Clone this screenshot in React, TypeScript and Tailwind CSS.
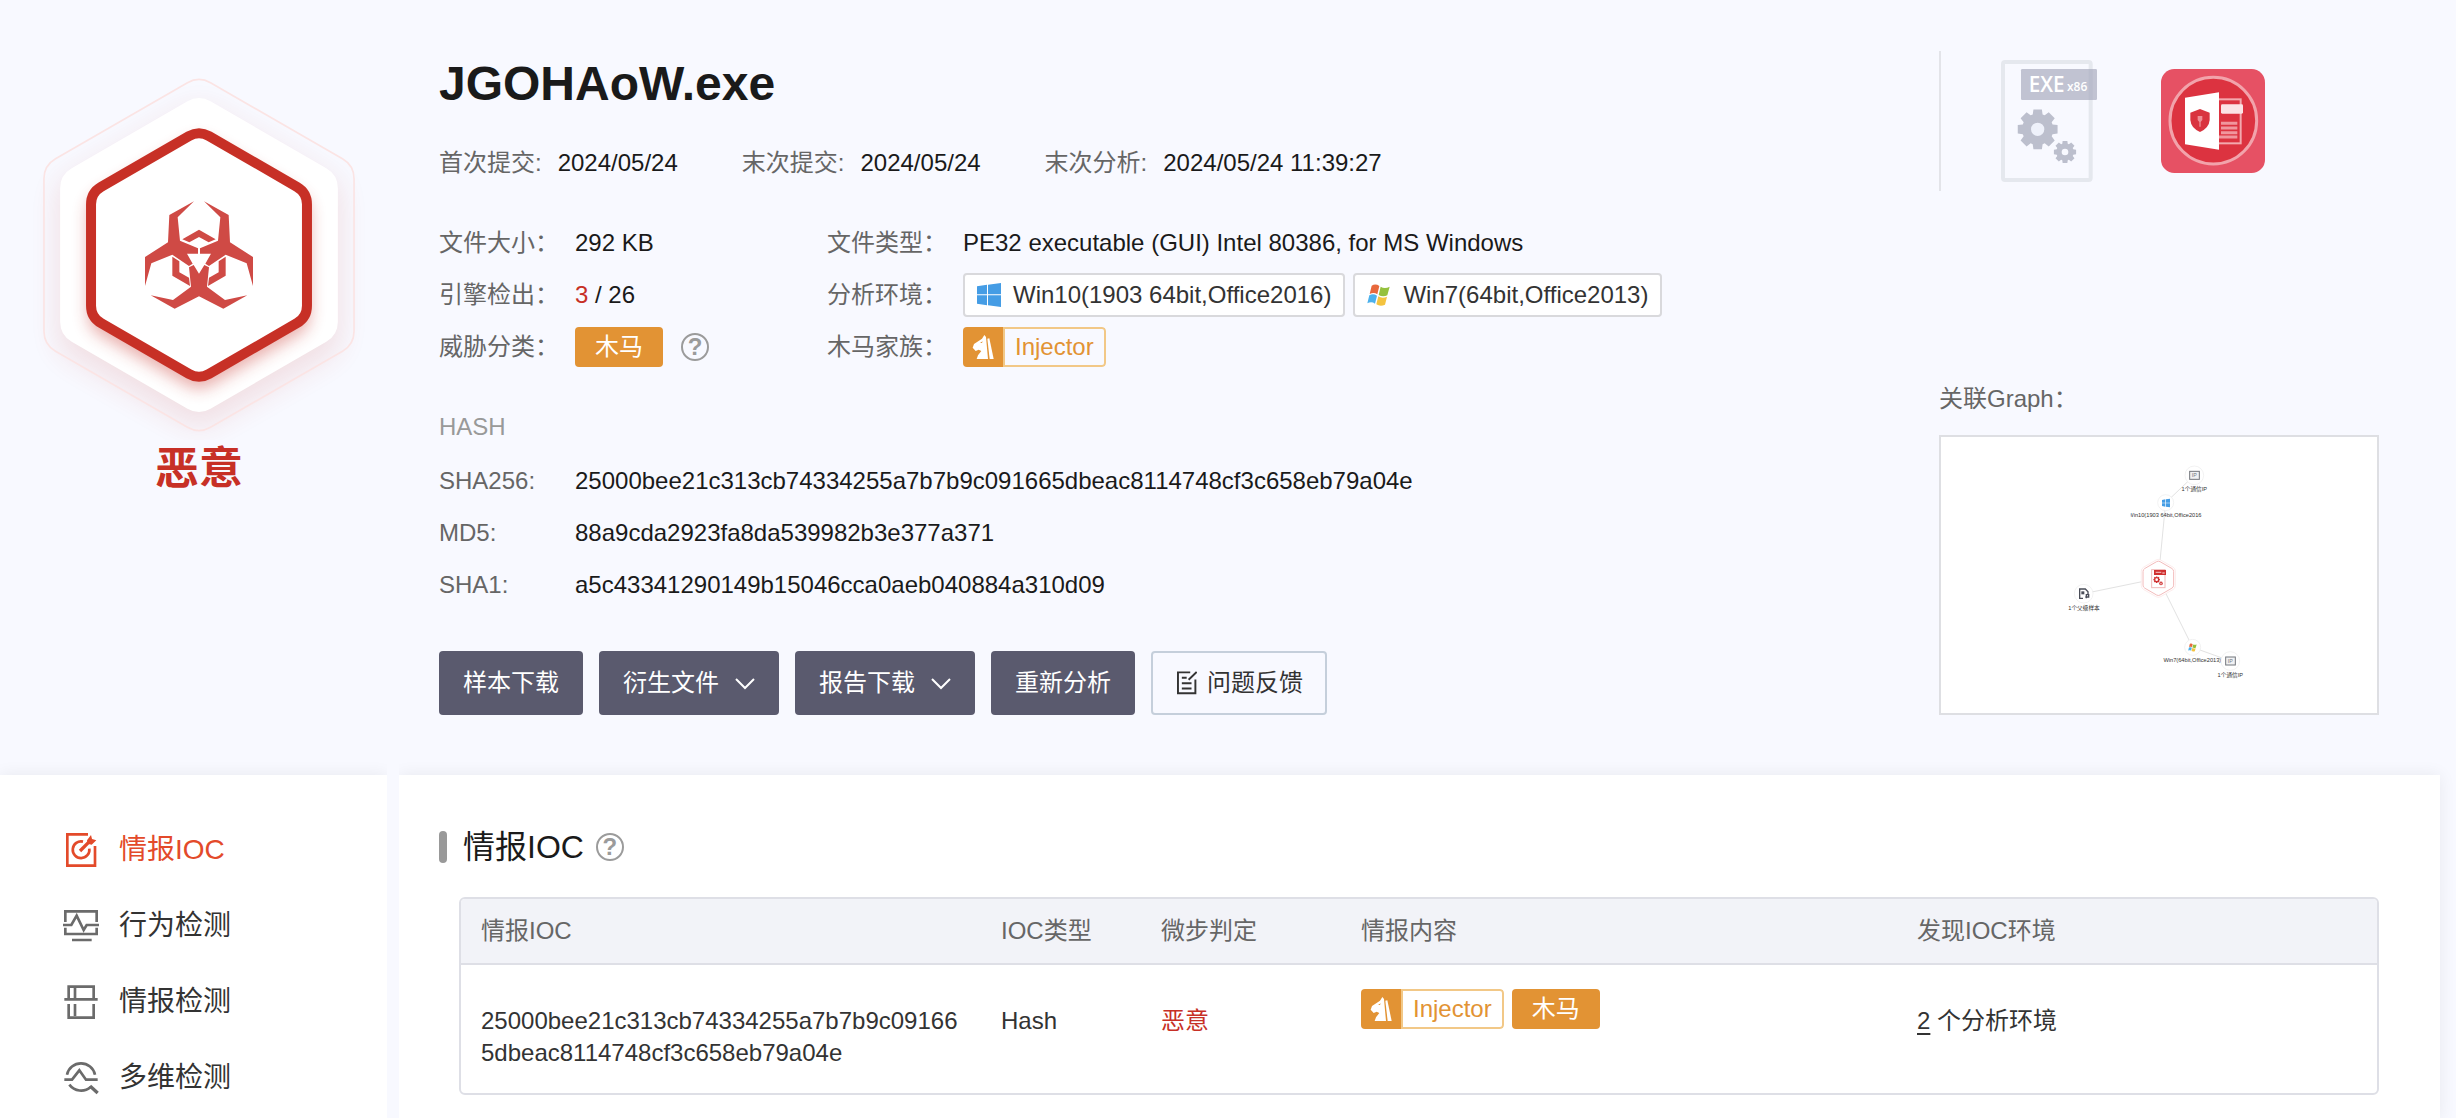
import React from "react";

const sans = "font-['Liberation_Sans','Noto_Sans_CJK_SC',sans-serif]";

function hexPath(cx: number, cy: number, radius: number, corner: number) {
  const pts = Array.from({ length: 6 }, (_, i) => {
    const a = (Math.PI / 3) * i - Math.PI / 2;
    return [cx + radius * Math.cos(a), cy + radius * Math.sin(a)];
  });
  const toward = (a: number[], b: number[]) => {
    const t = corner / radius;
    return `${(a[0] + (b[0] - a[0]) * t).toFixed(1)},${(a[1] + (b[1] - a[1]) * t).toFixed(1)}`;
  };
  return (
    pts
      .map((p, i) => {
        const prev = pts[(i + 5) % 6];
        const next = pts[(i + 1) % 6];
        return `${i === 0 ? "M" : "L"}${toward(p, prev)} Q${p[0].toFixed(1)},${p[1].toFixed(1)} ${toward(p, next)}`;
      })
      .join(" ") + " Z"
  );
}

function gearPath(cx: number, cy: number, outer: number, root: number, hole: number) {
  const pts: string[] = [];
  for (let i = 0; i < 8; i++) {
    const base = (Math.PI / 4) * i - Math.PI / 2;
    const steps: [number, number][] = [
      [-0.32, root],
      [-0.21, outer],
      [0.21, outer],
      [0.32, root],
    ];
    for (const [d, r] of steps) {
      pts.push(`${(cx + r * Math.cos(base + d)).toFixed(1)},${(cy + r * Math.sin(base + d)).toFixed(1)}`);
    }
  }
  return `M${pts.join("L")}Z M${cx - hole},${cy}a${hole},${hole} 0 1 0 ${hole * 2},0a${hole},${hole} 0 1 0 ${-hole * 2},0Z`;
}

function ThreatBadge() {
  const arm =
    "M612,484L686,525L690,607L759,651L759,738L740,670L677,644L627,678L616,671L633,641L600,641L600,625L654,602L661,532Z";
  const hook = "M677,650V707L624,738L627,713L656,697V664Z";
  return (
    <svg viewBox="0 0 1194 1200" className="h-[400px] w-full" role="img" aria-label="恶意">
      <defs>
        <filter id="soft" x="-30%" y="-30%" width="160%" height="160%">
          <feGaussianBlur stdDeviation="42" />
        </filter>
        <filter id="glow" x="-30%" y="-30%" width="160%" height="160%">
          <feGaussianBlur stdDeviation="24" />
        </filter>
        <clipPath id="plate">
          <path d={hexPath(597, 645, 481, 40)} />
        </clipPath>
      </defs>
      <path d={hexPath(597, 682, 490, 40)} fill="#c52d26" opacity="0.12" filter="url(#soft)" />
      <path d={hexPath(597, 645, 537, 40)} fill="none" stroke="#fbe4e4" strokeWidth="5" />
      <path d={hexPath(597, 645, 481, 40)} fill="#fff" />
      <g clipPath="url(#plate)">
        <path d={hexPath(597, 672, 385, 40)} fill="#c52d26" opacity="0.38" filter="url(#glow)" />
      </g>
      <path d={hexPath(597, 645, 374, 35)} fill="#fff" stroke="#c73026" strokeWidth="30" />
      <g fill="#cf4a45">
        <path d={arm} />
        <path d={arm} transform="matrix(-1 0 0 1 1194 0)" />
        <path d="M597,701L613,675L627,682L621,740L675,780L742,766L670,806L597,769L524,806L452,766L519,780L573,740L567,682L581,675Z" />
        <path d="M597,569L647,598L626,607L597,591L568,607L547,598Z" />
        <path d={hook} />
        <path d={hook} transform="matrix(-1 0 0 1 1194 0)" />
      </g>
    </svg>
  );
}

function Win10Logo() {
  return (
    <svg viewBox="0 0 72 72" className="size-6" fill="#459de5" aria-hidden="true">
      <path d="M0,10L30,5V34H0Z M33,5L72,0V34H33Z M0,37H30V67L0,62Z M33,37H72V72L33,67Z" />
    </svg>
  );
}

function Win7Shapes() {
  return (
    <>
      <path fill="#e8683c" d="M14,8C22,3 30,4 37,9L31,34C24,29 16,29 8,33Z" />
      <path fill="#95c13d" d="M41,11C49,16 58,16 68,11L61,37C53,41 43,41 35,36Z" />
      <path fill="#4cb1ec" d="M7,37C15,32 23,33 30,38L24,62C17,57 9,57 1,61Z" />
      <path fill="#f4c33f" d="M34,40C42,45 51,45 60,41L54,65C45,69 36,69 28,64Z" />
    </>
  );
}

function Win7Logo() {
  return (
    <svg viewBox="0 0 72 72" className="size-6" aria-hidden="true">
      <Win7Shapes />
    </svg>
  );
}

function FamilyTag() {
  return (
    <a href="#injector" className="flex h-10 items-stretch overflow-hidden rounded text-2xl leading-9 text-[#e29334]">
      <span className="flex w-10 items-center justify-center bg-[#e29334]">
        <svg viewBox="52 222 66 78" className="h-[26px] w-[22px]" fill="#fff" aria-hidden="true">
          <path d="M89,225L94,231L100,297H66L70,286L80,273L72,269L63,273L54,263L58,252L82,236Z" />
          <path d="M98,236L104,235L117,297H105Z" />
          <path d="M76,249L84,244L82,249Z" fill="#e29334" />
        </svg>
      </span>
      <span className="rounded-r border-2 border-[#f2c887] px-[10px]">Injector</span>
    </a>
  );
}

function ClassTag() {
  return <span className="flex h-10 w-[88px] items-center justify-center rounded bg-[#e29334] text-2xl leading-9 text-white">木马</span>;
}

function Help({ label }: { label: string }) {
  return (
    <button
      type="button"
      aria-label={label}
      className="flex size-7 items-center justify-center rounded-full border-2 border-[#9b9b9b] text-2xl leading-6 font-bold text-[#9b9b9b]"
    >
      ?
    </button>
  );
}

function Row({ label, children }: { label: string; children: React.ReactNode }) {
  return (
    <div className="flex h-[52px] items-center">
      <dt className="w-[136px] shrink-0 text-[#666]">{label}</dt>
      <dd className="flex items-center whitespace-nowrap">{children}</dd>
    </div>
  );
}

function EnvTag({ icon, children }: { icon: React.ReactNode; children: React.ReactNode }) {
  return (
    <a href="#env" className="flex h-11 items-center gap-3 rounded border-2 border-[#d9d9dc] bg-white px-3 text-[#333]">
      {icon}
      {children}
    </a>
  );
}

function Chevron() {
  return (
    <svg viewBox="0 0 20 20" className="size-5" fill="none" stroke="currentColor" strokeWidth="2" aria-hidden="true">
      <path d="M1,6L10,15L19,6" />
    </svg>
  );
}

function DarkButton({ children, menu }: { children: React.ReactNode; menu?: boolean }) {
  return (
    <button type="button" aria-haspopup={menu ? "menu" : undefined} className="flex h-16 items-center gap-4 rounded bg-[#5a5a6e] px-6 text-white">
      {children}
      {menu && <Chevron />}
    </button>
  );
}

function ExeIcon() {
  return (
    <svg viewBox="243 90 288 366" className="h-[122px] w-24" role="img" aria-label="EXE x86">
      <rect x="249" y="96" width="263" height="354" rx="6" fill="none" stroke="#e5e8ee" strokeWidth="12" />
      <rect x="303" y="117" width="228" height="93" rx="4" fill="#c1c3d2" />
      <rect x="506" y="117" width="12" height="93" fill="#babdcd" />
      <g className="font-['Open_Sans','Noto_Sans',sans-serif]" fill="#fff">
        <text x="326" y="186" fontSize="62" fontWeight="600">EXE</text>
        <text x="441" y="184" fontSize="36" fontWeight="600">x86</text>
      </g>
      <circle cx="353" cy="298" r="24" fill="#eef1fa" />
      <g fill="#bcbfcd" fillRule="evenodd">
        <path d={gearPath(353, 298, 61, 47, 20)} />
        <path d={gearPath(435, 366, 34, 26, 10)} />
      </g>
    </svg>
  );
}

function OfficeIcon() {
  return (
    <svg viewBox="723 117 312 312" className="size-[104px]" role="img" aria-label="Office">
      <rect x="723" y="117" width="312" height="312" rx="40" fill="#e65164" />
      <circle cx="880" cy="272" r="130" fill="#dc3340" stroke="#f2a3ab" strokeWidth="9" />
      <rect x="890" y="208" width="72" height="132" fill="none" stroke="#f3a9ae" strokeWidth="6" />
      <rect x="903" y="223" width="66" height="28" rx="4" fill="#fbe3e5" />
      <path d="M903,280H952M903,294H952M903,308H952M896,321H952" stroke="#f0969d" strokeWidth="9" />
      <path d="M795,203L897,187V359L795,343Z" fill="#fff" />
      <path d="M840,237L869,248V270Q867,294 840,306Q813,294 811,270V248Z" fill="#d9343f" />
      <path d="M833,258H847V270L842,276V290H838V276L833,270Z" fill="#ee8e95" />
    </svg>
  );
}

function GraphIp({ x, y }: { x: number; y: number }) {
  return (
    <g>
      <circle cx={x} cy={y} r="28" fill="#fff" stroke="#ececec" strokeWidth="2" />
      <rect x={x - 14} y={y - 12} width="29" height="24" fill="#f1f2f4" stroke="#73767d" strokeWidth="3" />
      <text x={x} y={y + 6} fontSize="16" textAnchor="middle" fill="#73767d">IP</text>
      <text x={x} y={y + 47} fontSize="17" textAnchor="middle">1个通信IP</text>
    </g>
  );
}

function GraphPreview() {
  return (
    <svg viewBox="63 201 1308 828" className="block w-full" fill="#333" role="img" aria-label="关联Graph">
      <defs>
        <clipPath id="label">
          <rect x="632" y="420" width="220" height="30" />
        </clipPath>
      </defs>
      <path d="M715,625L737,398L823,316M715,625L491,671M715,625L818,832L931,873" fill="none" stroke="#e2e2e2" strokeWidth="3" />
      <path d={hexPath(715, 625, 59, 8)} fill="#fff" stroke="#fbe3e3" strokeWidth="2" />
      <path d={hexPath(715, 625, 53, 6)} fill="#fff" stroke="#f3bcbc" strokeWidth="3" />
      <rect x="695" y="599" width="40" height="54" fill="#fff" stroke="#f0b9b9" strokeWidth="3" />
      <rect x="702" y="600" width="36" height="15" fill="#cf2f2f" />
      <path d="M707,607H724M727,609H734" stroke="#efa9a9" strokeWidth="4" />
      <path d={gearPath(710, 629, 10, 8, 4)} fill="#cf2f2f" fillRule="evenodd" />
      <path d={gearPath(723, 640, 6, 4, 2)} fill="#cf2f2f" fillRule="evenodd" />
      <GraphIp x={823} y={316} />
      <circle cx="737" cy="398" r="24" fill="#fff" stroke="#ececec" strokeWidth="2" />
      <path fill="#459de5" d="M726,390L736,388V398H726ZM738,388L750,386V398H738ZM726,400H736V410L726,408ZM738,400H750V412L738,410Z" />
      <text x="625" y="441" fontSize="17" clipPath="url(#label)">Win10(1903 64bit,Office2016</text>
      <circle cx="491" cy="671" r="28" fill="#fff" stroke="#ececec" strokeWidth="2" />
      <path d="M489,685H479V657H496L504,665V672M499,685V674H506V681H496" fill="none" stroke="#4a4d58" strokeWidth="4" />
      <rect x="484" y="664" width="9" height="9" fill="#4a4d58" />
      <text x="492" y="720" fontSize="17" textAnchor="middle">1个父级样本</text>
      <circle cx="818" cy="832" r="24" fill="#fff" stroke="#ececec" strokeWidth="2" />
      <g transform="translate(804 819) scale(0.38)">
        <Win7Shapes />
      </g>
      <text x="817" y="876" fontSize="17" textAnchor="middle">Win7(64bit,Office2013)</text>
      <GraphIp x={931} y={873} />
    </svg>
  );
}

const navItems = [
  {
    label: "情报IOC",
    active: true,
    viewBox: "189 213 108 108",
    icon: (
      <>
        <path d="M264,220H202V314H285V255" />
        <path d="M249,242A25,25 0 1 0 268,263" />
        <path d="M240,270L268,242" strokeWidth="10" />
        <path d="M261,238L273,222L276,234L289,238L275,251L263,248Z" fill="currentColor" stroke="none" />
      </>
    ),
  },
  {
    label: "行为检测",
    viewBox: "189 444 108 108",
    icon: <path d="M196,486V454H290V486M189,495H214L230,467L251,510L260,495H297M196,503V522H290V503M216,540H275" />,
  },
  {
    label: "情报检测",
    viewBox: "189 668 108 108",
    icon: <path d="M206,710V676H281V710M193,714H293M225,676V710M206,728V769H281V728M225,728V764" />,
  },
  {
    label: "多维检测",
    viewBox: "189 901 108 108",
    icon: (
      <>
        <path d="M201,945A43,43 0 0 1 285,945M193,960H216L238,932L258,960H293M208,975A44,44 0 0 0 272,982" />
        <path d="M270,979L293,1000" strokeWidth="10" />
      </>
    ),
  },
];

export default function App() {
  return (
    <div className={`${sans} flex min-h-screen flex-col overflow-hidden bg-[#f8f9ff] text-2xl leading-8 text-[#1a1a1a]`}>
      <header className="flex pb-15">
        <div className="flex w-[398px] shrink-0 flex-col items-center pt-10">
          <ThreatBadge />
          <strong className="text-[44px] leading-[58px] font-bold text-[#c73026]">恶意</strong>
        </div>

        <main className="min-w-0 flex-1 pt-[49px] pl-[41px]">
          <h1 className="text-5xl leading-[70px] font-bold">JGOHAoW.exe</h1>
          <dl className="mt-5 flex h-12 items-center gap-16">
            {[
              ["首次提交:", "2024/05/24"],
              ["末次提交:", "2024/05/24"],
              ["末次分析:", "2024/05/24 11:39:27"],
            ].map(([k, v]) => (
              <div key={k} className="flex gap-4 whitespace-nowrap">
                <dt className="text-[#666]">{k}</dt>
                <dd>{v}</dd>
              </div>
            ))}
          </dl>

          <dl className="mt-[30px] grid grid-cols-[388px_1fr]">
            <Row label="文件大小：">292 KB</Row>
            <Row label="文件类型：">PE32 executable (GUI) Intel 80386, for MS Windows</Row>
            <Row label="引擎检出：">
              <span className="whitespace-pre"><span className="text-[#c73026]">3</span> / 26</span>
            </Row>
            <Row label="分析环境：">
              <span className="flex gap-2">
                <EnvTag icon={<Win10Logo />}>Win10(1903 64bit,Office2016)</EnvTag>
                <EnvTag icon={<Win7Logo />}>Win7(64bit,Office2013)</EnvTag>
              </span>
            </Row>
            <Row label="威胁分类：">
              <span className="flex items-center gap-[18px]">
                <ClassTag />
                <Help label="威胁分类说明" />
              </span>
            </Row>
            <Row label="木马家族：">
              <FamilyTag />
            </Row>
          </dl>

          <h2 className="mt-7 leading-[52px] text-[#999]">HASH</h2>
          <dl className="mt-[2px]">
            <Row label="SHA256:">25000bee21c313cb74334255a7b7b9c091665dbeac8114748cf3c658eb79a04e</Row>
            <Row label="MD5:">88a9cda2923fa8da539982b3e377a371</Row>
            <Row label="SHA1:">a5c43341290149b15046cca0aeb040884a310d09</Row>
          </dl>

          <div className="mt-10 flex gap-4">
            <DarkButton>样本下载</DarkButton>
            <DarkButton menu>衍生文件</DarkButton>
            <DarkButton menu>报告下载</DarkButton>
            <DarkButton>重新分析</DarkButton>
            <button type="button" className="flex h-16 items-center gap-[10px] rounded border-2 border-[#c5cfdb] pr-[22px] pl-6 text-[#333]">
              <svg viewBox="111 93 62 72" className="h-6 w-5" fill="none" stroke="currentColor" strokeWidth="6" aria-hidden="true">
                <path d="M152,96H114V161H168V118M172,95L147,119M126,113H141M126,130H156M126,146H156" />
              </svg>
              问题反馈
            </button>
          </div>
        </main>

        <aside className="mr-[77px] w-[440px] shrink-0 pt-[51px]">
          <div className="flex h-[140px] items-center gap-16 border-l-2 border-[#e3e4e9] pl-[60px]">
            <ExeIcon />
            <OfficeIcon />
          </div>
          <h2 className="mt-[172px] leading-[72px] text-[#666]">关联Graph：</h2>
          <a href="#graph" className="block border-2 border-[#dedfe3] bg-white">
            <GraphPreview />
          </a>
        </aside>
      </header>

      <div className="flex flex-1 gap-3 pr-4">
        <nav className="w-[387px] shrink-0 bg-white pt-[37px] shadow-[0_0_16px_rgba(0,0,0,0.07)] [clip-path:inset(-20px_0_0_0)]">
          {navItems.map((item) => (
            <a
              key={item.label}
              href={`#${item.label}`}
              aria-current={item.active ? "page" : undefined}
              className={`flex h-19 items-center gap-5 pl-[63px] text-[28px] ${item.active ? "text-[#e34a2a]" : "text-[#333]"}`}
            >
              <svg
                viewBox={item.viewBox}
                className={`size-9 ${item.active ? "text-[#e34a2a]" : "text-[#6b6b6b]"}`}
                fill="none"
                stroke="currentColor"
                strokeWidth="8"
                aria-hidden="true"
              >
                {item.icon}
              </svg>
              {item.label}
            </a>
          ))}
        </nav>

        <section className="flex-1 bg-white pt-12 pr-[61px] pb-6 pl-10 shadow-[0_0_16px_rgba(0,0,0,0.07)] [clip-path:inset(-20px_-20px_0_0)]">
          <div className="flex h-12 items-center">
            <span className="h-8 w-2 rounded bg-[#999]" />
            <h2 className="mr-3 ml-4 text-[32px] leading-10">情报IOC</h2>
            <Help label="情报IOC说明" />
          </div>
          <div className="mt-[26px] ml-5 overflow-hidden rounded-md border-2 border-[#dedfe6]">
            <table className="w-full table-fixed text-left text-[#333]">
              <colgroup>
                <col className="w-[520px]" />
                <col className="w-[160px]" />
                <col className="w-[200px]" />
                <col className="w-[556px]" />
                <col />
              </colgroup>
              <thead className="border-b-2 border-[#dedfe6] bg-[#f2f3f8] text-[#666]">
                <tr>
                  {["情报IOC", "IOC类型", "微步判定", "情报内容", "发现IOC环境"].map((h) => (
                    <th key={h} className="px-5 py-4 font-normal">{h}</th>
                  ))}
                </tr>
              </thead>
              <tbody>
                <tr className="align-top">
                  <td className="px-5 pt-10 pb-6 break-all">25000bee21c313cb74334255a7b7b9c091665dbeac8114748cf3c658eb79a04e</td>
                  <td className="px-5 pt-10">Hash</td>
                  <td className="px-5 pt-10 text-[#c73026]">恶意</td>
                  <td className="px-5 pt-6">
                    <div className="flex gap-2">
                      <FamilyTag />
                      <ClassTag />
                    </div>
                  </td>
                  <td className="px-5 pt-10">
                    <a href="#envs" className="underline decoration-2 underline-offset-4">2</a> 个分析环境
                  </td>
                </tr>
              </tbody>
            </table>
          </div>
        </section>
      </div>
    </div>
  );
}
